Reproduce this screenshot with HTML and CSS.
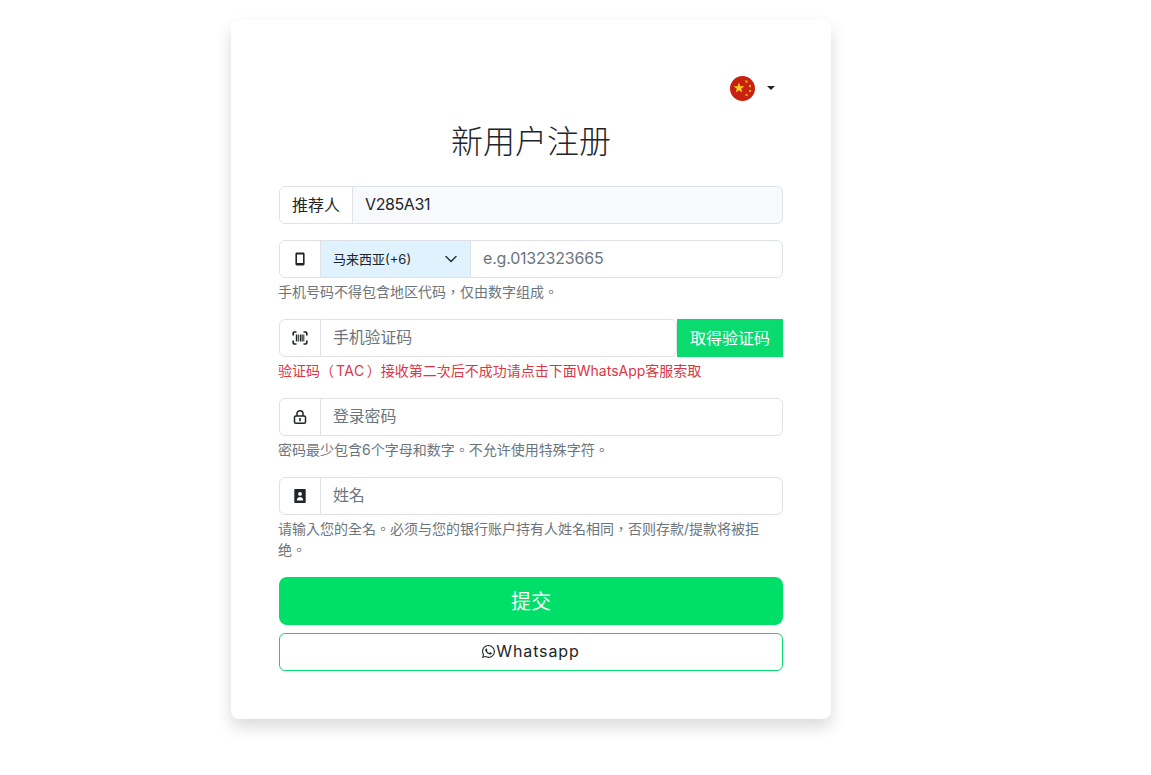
FILE: index.html
```html
<!DOCTYPE html>
<html lang="zh-TW">
<head>
  <meta charset="UTF-8" />
  <meta name="viewport" content="width=device-width, initial-scale=1.0"/>
  <title>新用户注册</title>
  <link rel="stylesheet" href="styles.css">
</head>
<body>

<div class="card">
  <!-- Language -->
  <div class="lang-row">
    <button class="lang-toggle" type="button">
      <svg class="flag" viewBox="0 0 25 25" width="25" height="25">
        <circle cx="12.500" cy="12.500" r="12.500" fill="#c8210f"/>
        <path d="M9 6.500l1.400 3.700 3.900.1-3.100 2.400 1.100 3.800L9 14.300l-3.300 2.200 1.100-3.800-3.100-2.400 3.900-.1z" fill="#f7d21c"/>
        <circle cx="16.500" cy="5.500" r="1.200" fill="#e9a71f"/>
        <circle cx="20" cy="10" r="1.200" fill="#e9a71f"/>
        <circle cx="20" cy="15" r="1.200" fill="#e9a71f"/>
        <circle cx="16.500" cy="19" r="1.200" fill="#e9a71f"/>
      </svg>
      <span class="caret"></span>
    </button>
  </div>

  <h1 class="title">新用户注册</h1>

  <form class="reg-form">
    <div class="field">
      <div class="input-group">
        <span class="addon addon-text">推荐人</span>
        <input class="control readonly" type="text" value="V285A31" readonly />
      </div>
    </div>

    <div class="field">
      <div class="input-group">
        <span class="addon">
          <svg viewBox="0 0 16 16" width="16" height="16">
            <path fill="#212529" fill-rule="evenodd" d="M4.800 1.500h6.400c.8 0 1.400.6 1.400 1.400v10.200c0 .8-.6 1.400-1.400 1.400H4.800c-.8 0-1.400-.6-1.400-1.400V2.900c0-.8.6-1.400 1.400-1.400zm.2 2v8.500h6V3.500z"/>
          </svg>
        </span>
        <label class="country">
          <select class="country-select">
            <option>马来西亚(+6)</option>
          </select>
          <svg class="chevron" viewBox="0 0 12 12" width="12" height="12">
            <path d="M1 3.500l5 5 5-5" fill="none" stroke="#343a40" stroke-width="1.600" stroke-linecap="round" stroke-linejoin="round"/>
          </svg>
        </label>
        <input class="control" type="text" placeholder="e.g.0132323665" />
      </div>
      <p class="help">手机号码不得包含地区代码，仅由数字组成。</p>
    </div>

    <div class="field">
      <div class="input-group">
        <span class="addon">
          <svg viewBox="0 0 16 16" width="16" height="16">
            <path d="M1.200 5.500V3.200c0-.7.5-1.200 1.200-1.200h2.100M11.500 2h2.100c.7 0 1.200.5 1.200 1.200v2.300M14.800 10.500v2.300c0 .7-.5 1.200-1.200 1.200h-2.100M4.500 14H2.400c-.7 0-1.200-.5-1.200-1.200v-2.300" fill="none" stroke="#212529" stroke-width="1.700"/>
            <path d="M3.800 4.500h1.600v7H3.800zM6.200 4.500h1v7h-1zM8 4.500h1.500v7H8zM10.200 4.500h.7v7h-.7zM11.300 4.500h1v7h-1z" fill="#212529"/>
          </svg>
        </span>
        <input class="control" type="text" placeholder="手机验证码" />
        <button class="tac-btn" type="button">取得验证码</button>
      </div>
      <p class="help help-danger">验证码（<span class="latin">TAC</span>）接收第二次后不成功请点击下面WhatsApp客服索取</p>
    </div>

    <div class="field">
      <div class="input-group">
        <span class="addon">
          <svg viewBox="0 0 16 16" width="16" height="16">
            <path fill="none" stroke="#212529" stroke-width="1.500" d="M5 7V4.500C5 3 6.300 1.800 8 1.800s3 1.200 3 2.700V7"/>
            <rect x="2.500" y="7" width="11" height="7.300" rx="1.200" fill="none" stroke="#212529" stroke-width="1.500"/>
            <path d="M7.200 9h1.600v3.200H7.200z" fill="#212529"/>
          </svg>
        </span>
        <input class="control" type="password" placeholder="登录密码" />
      </div>
      <p class="help">密码最少包含6个字母和数字。不允许使用特殊字符。</p>
    </div>

    <div class="field">
      <div class="input-group">
        <span class="addon">
          <svg viewBox="0 0 16 16" width="16" height="16">
            <path fill="#212529" fill-rule="evenodd" d="M3.300 1h9.400c.6 0 1 .4 1 1v12c0 .6-.4 1-1 1H3.300c-.6 0-1-.4-1-1V2c0-.6.4-1 1-1zM8 4a1.900 1.900 0 1 0 0 3.800A1.900 1.900 0 0 0 8 4zm-3.200 8.500h6.400c0-2-1.400-3.400-3.200-3.400s-3.200 1.400-3.200 3.400z"/>
          </svg>
        </span>
        <input class="control" type="text" placeholder="姓名" />
      </div>
      <p class="help">请输入您的全名。必须与您的银行账户持有人姓名相同，否则存款/提款将被拒绝。</p>
    </div>

    <button class="submit-btn" type="button">提交</button>
    <button class="wa-btn" type="button">
      <svg viewBox="0 0 16 16" width="13" height="13">
        <path fill="#212529" d="M13.601 2.326A7.854 7.854 0 0 0 7.994 0C3.627 0 .068 3.558.064 7.926c0 1.399.366 2.76 1.057 3.965L0 16l4.204-1.102a7.933 7.933 0 0 0 3.79.965h.004c4.368 0 7.926-3.558 7.93-7.93A7.898 7.898 0 0 0 13.6 2.326zM7.994 14.521a6.573 6.573 0 0 1-3.356-.92l-.24-.144-2.494.654.666-2.433-.156-.251a6.56 6.56 0 0 1-1.007-3.505c0-3.626 2.957-6.584 6.591-6.584a6.56 6.56 0 0 1 4.66 1.931 6.557 6.557 0 0 1 1.928 4.66c-.004 3.639-2.961 6.592-6.592 6.592zm3.615-4.934c-.197-.099-1.17-.578-1.353-.646-.182-.065-.315-.099-.445.099-.133.197-.513.646-.627.775-.114.133-.232.148-.43.05-.197-.1-.836-.308-1.592-.985-.59-.525-.985-1.175-1.103-1.372-.114-.198-.011-.304.088-.403.087-.088.197-.232.296-.346.1-.114.133-.198.198-.33.065-.134.034-.248-.015-.347-.05-.099-.445-1.076-.612-1.47-.16-.389-.323-.335-.445-.34-.114-.007-.247-.007-.38-.007a.729.729 0 0 0-.529.247c-.182.198-.691.677-.691 1.654 0 .977.71 1.916.81 2.049.098.133 1.394 2.132 3.383 2.992.47.205.84.326 1.129.418.475.152.904.129 1.246.08.38-.058 1.171-.48 1.338-.943.164-.464.164-.86.114-.943-.049-.084-.182-.133-.38-.232z"/>
      </svg><span class="wa-label">Whatsapp</span>
    </button>
  </form>
</div>

</body>
</html>
```

FILE: styles.css
```css
:root {
  --green: #00df67;
  --border: #dee2e6;
  --text: #212529;
  --muted: #6c757d;
}

* {
  box-sizing: border-box;
}

body {
  margin: 0;
  padding: 20px 0 56px 231px;
  font-family: Inter, "Noto Sans CJK TC", sans-serif;
  font-size: 16px;
  color: var(--text);
  background: #fff;
}

.card {
  width: 600px;
  height: 699px;
  padding: 48px;
  background: #fff;
  border-radius: 8px;
  box-shadow: 0 8px 16px rgba(0, 0, 0, 0.15);
}

.lang-row {
  display: flex;
  justify-content: flex-end;
  height: 40px;
}

.lang-toggle {
  display: flex;
  align-items: center;
  gap: 12px;
  height: 40px;
  padding: 0 8px 0 0;
  border: none;
  background: none;
}

.flag {
  display: block;
}

.caret {
  width: 0;
  height: 0;
  border-top: 4px solid var(--text);
  border-left: 4px solid transparent;
  border-right: 4px solid transparent;
}

.title {
  margin: 15px 0 25px;
  font-size: 32px;
  font-weight: 300;
  line-height: 38px;
  text-align: center;
}

.field {
  margin-bottom: 16px;
}

.input-group {
  display: flex;
  height: 38px;
}

.addon {
  display: flex;
  align-items: center;
  justify-content: center;
  flex: none;
  width: 42px;
  background: #fff;
  border: 1px solid var(--border);
  border-radius: 6px 0 0 6px;
}

.addon-text {
  width: 74px;
  padding-bottom: 2px;
}

.control {
  flex: 1;
  min-width: 0;
  margin-left: -1px;
  padding: 0 12px 2px;
  font: inherit;
  letter-spacing: -0.2px;
  color: var(--text);
  background: #fff;
  border: 1px solid var(--border);
  border-radius: 0 6px 6px 0;
  outline: none;
}

.control::placeholder {
  color: #6c757d;
}

.readonly {
  background: #f8f9fa;
  letter-spacing: -0.4px;
}

.country {
  position: relative;
  flex: none;
  width: 151px;
  margin-left: -1px;
}

.country-select {
  width: 100%;
  height: 100%;
  padding: 0 36px 0 12px;
  font-family: inherit;
  font-size: 13px;
  color: var(--text);
  background: #e0f2fe;
  border: 1px solid var(--border);
  border-radius: 0;
  appearance: none;
  outline: none;
}

.chevron {
  position: absolute;
  top: 13px;
  right: 14px;
}

.tac-btn {
  flex: none;
  width: 106px;
  padding: 0 0 2px;
  font: inherit;
  color: #fff;
  background: #0adb6e;
  border: none;
}

.help {
  margin: 3px 0 0 -1px;
  padding-bottom: 1px;
  font-size: 14px;
  line-height: 21px;
  color: var(--muted);
}

.help-danger {
  color: #dc3545;
}

.latin {
  padding: 0 2px;
  letter-spacing: 0.5px;
}

.submit-btn {
  display: block;
  width: 100%;
  height: 48px;
  padding: 0 0 2px;
  font: inherit;
  font-size: 20px;
  color: #fff;
  background: var(--green);
  border: none;
  border-radius: 8px;
}

.wa-btn {
  display: flex;
  align-items: center;
  justify-content: center;
  gap: 1px;
  width: 100%;
  height: 38px;
  margin-top: 8px;
  padding: 0 0 2px;
  font: inherit;
  color: var(--text);
  background: #fff;
  border: 1px solid #0adb6e;
  border-radius: 6px;
}

.wa-label {
  letter-spacing: 0.9px;
}
```
